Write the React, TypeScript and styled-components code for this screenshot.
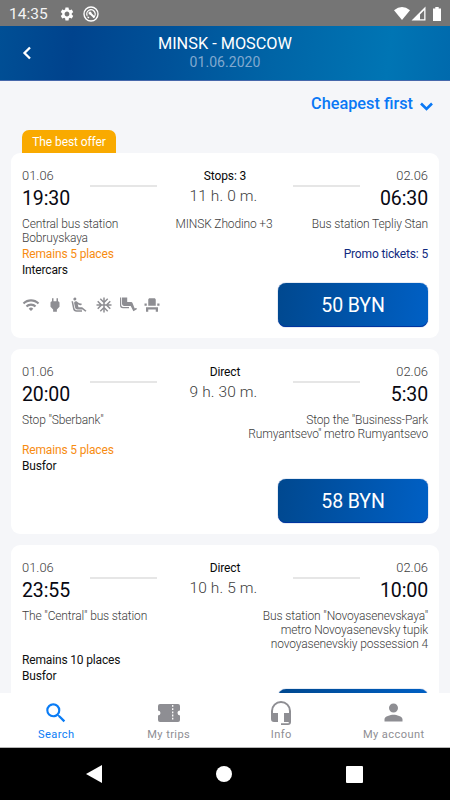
import React from "react";
import styled, { createGlobalStyle } from "styled-components";
import {
  MdWifi,
  MdPower,
  MdAirlineSeatReclineExtra,
  MdAcUnit,
  MdSearch,
  MdPerson,
  MdEventSeat,
  MdSettings,
} from "react-icons/md";

const GlobalStyle = createGlobalStyle`
  * { box-sizing: border-box; }
  body { margin: 0; background: #f5f6f9; font-family: Roboto, sans-serif; }
`;

const Screen = styled.div`
  width: 450px;
  height: 800px;
  display: flex;
  flex-direction: column;
  overflow: hidden;
  background: #f5f6f9;
`;

const StatusBar = styled.div`
  height: 26px;
  flex: none;
  display: flex;
  align-items: center;
  padding: 1px 8px 0 9px;
  background: #757575;
  color: #fff;
  svg { display: block; flex: none; }
`;

const Clock = styled.span`
  font-size: 15.5px;
  width: 50px;
  line-height: 24px;
  padding-top: 1px;
  color: #f4f4f4;
`;

const Spacer = styled.div`
  flex: 1;
`;

const StatusIcons = styled.div<{ $gap: number }>`
  display: flex;
  align-items: center;
  gap: ${(p) => p.$gap}px;
`;

const Header = styled.header`
  height: 55px;
  flex: none;
  display: grid;
  grid-template-columns: 54px 1fr 54px;
  align-items: center;
  background: linear-gradient(97deg, #004f95 0%, #00438d 16%, #005299 38%, #0064a6 60%, #0075b4 86%, #006aad 100%);
  border-bottom: 1px solid #4668ab;
  color: #fff;
`;

const BackButton = styled.button`
  border: 0;
  padding: 0 0 1px 22px;
  background: none;
  color: #fff;
  svg { display: block; }
`;

const Titles = styled.div`
  text-align: center;
  padding-bottom: 1px;
`;

const Route = styled.div`
  font-size: 16.3px;
  line-height: 19px;
`;

const RouteDate = styled.div`
  font-size: 14px;
  line-height: 19px;
  color: #80a9cf;
  letter-spacing: 0.05px;
`;

const SortRow = styled.button`
  height: 49px;
  flex: none;
  display: flex;
  align-items: center;
  justify-content: flex-end;
  gap: 7px;
  border: 0;
  background: none;
  padding: 0 17px 3px 0;
  color: #0a78f5;
  font: 500 16.3px/20px Roboto, sans-serif;
  svg { display: block; margin-top: 4px; }
`;

const List = styled.main`
  flex: 1;
  min-height: 0;
  overflow: hidden;
  padding: 0 11px;
`;

const Offer = styled.div`
  width: 94px;
  height: 23px;
  margin-left: 11px;
  border-radius: 7px 7px 0 0;
  background: #f9aa00;
  color: #fff;
  font-size: 12px;
  letter-spacing: -0.1px;
  line-height: 24px;
  text-align: center;
`;

const Card = styled.article`
  min-height: 185px;
  margin-bottom: 11px;
  padding: 14px 11px 11px;
  border-radius: 9px;
  background: #fff;
  color: #404040;
  display: flex;
  flex-direction: column;
`;

const Timeline = styled.div`
  height: 46px;
  display: grid;
  grid-template-columns: 68px 67px 1fr 67px 68px;
`;

const Moment = styled.div<{ $end?: boolean }>`
  text-align: ${(p) => (p.$end ? "right" : "left")};
`;

const Day = styled.div`
  font-size: 12.9px;
  font-weight: 300;
  line-height: 17px;
`;

const Time = styled.div`
  font-size: 19.5px;
  letter-spacing: -0.1px;
  line-height: 28px;
  padding-top: 1px;
  color: #080812;
`;

const Rule = styled.div`
  height: 2px;
  margin-top: 18px;
  background: #e6e6e6;
`;

const Trip = styled.div`
  display: flex;
  flex-direction: column;
  align-items: center;
  white-space: nowrap;
`;

const Stops = styled.div`
  font-size: 12px;
  letter-spacing: -0.1px;
  line-height: 17px;
  padding-top: 1px;
  color: #080808;
`;

const Duration = styled.div`
  margin-right: 3px;
  font-size: 15.5px;
  font-weight: 300;
  line-height: 20px;
  letter-spacing: 0.1px;
  padding-top: 1px;
`;

const Stations = styled.div<{ $via: boolean }>`
  min-height: 29px;
  margin-top: 4px;
  padding-bottom: 1px;
  display: grid;
  grid-template-columns: ${(p) => (p.$via ? "120px 164px 122px" : "200px 206px")};
  font-size: 12px;
  font-weight: 300;
  letter-spacing: -0.14px;
  line-height: 14px;
  white-space: pre;
`;

const Station = styled.div<{ $align?: string }>`
  text-align: ${(p) => p.$align || "left"};
`;

const InfoLine = styled.div<{ $tone?: string }>`
  display: flex;
  justify-content: space-between;
  font-size: 12px;
  letter-spacing: -0.16px;
  line-height: 16px;
  color: ${(p) => p.$tone || "#101010"};
`;

const Promo = styled.span`
  color: #102a80;
`;

const CardFoot = styled.div`
  display: flex;
  justify-content: space-between;
  align-items: center;
  margin-top: 5px;
`;

const Amenities = styled.div`
  display: flex;
  gap: 6.2px;
  color: #8e8e93;
  svg { width: 18px; height: 18px; display: block; }
`;

const Price = styled.button`
  width: 150px;
  height: 44px;
  border: 0;
  border-radius: 8px;
  padding: 2px 0 0;
  background: linear-gradient(97deg, #00488f, #0060c5);
  box-shadow: inset 0 -1px 0 #0034a0, 0 0 1px #003d9a;
  color: #fff;
  font: 400 19.5px/24px Roboto, sans-serif;
  letter-spacing: -0.1px;
`;

const Tabs = styled.nav`
  height: 55px;
  flex: none;
  display: grid;
  grid-template-columns: repeat(4, 1fr);
  background: #fff;
  border-bottom: 1px solid #b5b5b5;
`;

const Tab = styled.button<{ $active?: boolean }>`
  display: flex;
  flex-direction: column;
  align-items: center;
  border: 0;
  padding: 5px 0 0;
  background: none;
  color: ${(p) => (p.$active ? "#0a7cf5" : "#8e8e93")};
  font: 400 11.1px/15px Roboto, sans-serif;
  letter-spacing: 0.4px;
`;

const TabIcon = styled.span`
  height: 29px;
  display: flex;
  align-items: center;
  svg { display: block; }
`;

const SystemNav = styled.footer`
  height: 52px;
  flex: none;
  display: flex;
  background: #000;
  align-items: center;
  justify-content: space-between;
  padding: 0 87px 0 86px;
  svg { display: block; }
`;

interface TripData {
  stops: string;
  duration: string;
  depart: string;
  arrive: string;
  from: string;
  via?: string;
  to: string;
  remains: string;
  low: boolean;
  carrier: string;
  promo?: string;
  amenities?: boolean;
  price?: string;
}

const trips: TripData[] = [
  {
    stops: "Stops: 3", duration: "11 h. 0 m.", depart: "19:30", arrive: "06:30",
    from: "Central bus station\nBobruyskaya", via: "MINSK Zhodino +3", to: "Bus station Tepliy Stan",
    remains: "Remains 5 places", low: true, carrier: "Intercars",
    promo: "Promo tickets: 5", amenities: true, price: "50 BYN",
  },
  {
    stops: "Direct", duration: "9 h. 30 m.", depart: "20:00", arrive: "5:30",
    from: 'Stop "Sberbank"', to: 'Stop the "Business-Park\nRumyantsevo" metro Rumyantsevo',
    remains: "Remains 5 places", low: true, carrier: "Busfor", price: "58 BYN",
  },
  {
    stops: "Direct", duration: "10 h. 5 m.", depart: "23:55", arrive: "10:00",
    from: 'The "Central" bus station',
    to: 'Bus station "Novoyasenevskaya"\nmetro Novoyasenevsky tupik\nnovoyasenevskiy possession 4',
    remains: "Remains 10 places", low: false, carrier: "Busfor",
  },
];

const LegroomIcon = () => (
  <svg viewBox="0 0 18 18">
    <path
      fill="currentColor"
      d="M1 1.5h1.2v7.6c0 1.1.8 1.8 1.8 1.8h6v1.3H4a3 3 0 0 1-3-3ZM3 1.5h5.2V6h4c.6 0 1 .3 1.3.9l2.2 5.6 1.2-.4c.9-.2 1.3 1 .5 1.4l-3 1.7-2.7-5.3H5.2C4 9.9 3 9 3 7.8Z"
    />
  </svg>
);

const TripCard = ({ trip }: { trip: TripData }) => (
  <Card>
    <Timeline>
      <Moment><Day>01.06</Day><Time>{trip.depart}</Time></Moment>
      <Rule />
      <Trip><Stops>{trip.stops}</Stops><Duration>{trip.duration}</Duration></Trip>
      <Rule />
      <Moment $end><Day>02.06</Day><Time>{trip.arrive}</Time></Moment>
    </Timeline>
    <Stations $via={!!trip.via}>
      <Station>{trip.from}</Station>
      {trip.via && <Station $align="center">{trip.via}</Station>}
      <Station $align="right">{trip.to}</Station>
    </Stations>
    <InfoLine $tone={trip.low ? "#f78c12" : undefined}>
      <span>{trip.remains}</span>
      {trip.promo && <Promo>{trip.promo}</Promo>}
    </InfoLine>
    <InfoLine>{trip.carrier}</InfoLine>
    <CardFoot>
      <Amenities>
        {trip.amenities && (
          <>
            <MdWifi /><MdPower /><MdAirlineSeatReclineExtra />
            <MdAcUnit /><LegroomIcon /><MdEventSeat />
          </>
        )}
      </Amenities>
      <Price>{trip.price}</Price>
    </CardFoot>
  </Card>
);

export default function App() {
  return (
    <Screen>
      <GlobalStyle />
      <StatusBar>
        <Clock>14:35</Clock>
        <StatusIcons $gap={8}>
          <MdSettings size={16} />
          <svg width="16" height="16" viewBox="0 0 16 16" fill="none" stroke="#fff">
            <circle cx="8" cy="8" r="7" strokeWidth="1.4" />
            <path d="M4.2 9.8A4.2 4.2 0 1 1 10.2 11.5M4.5 10.8l1.5 1.2" strokeWidth="1.3" />
            <path d="M6.5 6.8l5 4.7" strokeWidth="2" />
            <circle cx="7" cy="7.1" r="1.5" fill="#fff" stroke="none" />
          </svg>
        </StatusIcons>
        <Spacer />
        <StatusIcons $gap={0}>
          <svg width="48" height="16" viewBox="0 0 48 16" fill="#fff">
            <path d="M0 4.2Q8-2.2 16 4.2L8 14Z" />
            <path fillRule="evenodd" d="M31.5 0.5v14H17.5ZM30.2 4.2l-4.2 4.2v4.8h4.2Z" />
            <path d="M41.3 1h3.4v1.5H47V15h-8V2.5h2.3Z" />
          </svg>
        </StatusIcons>
      </StatusBar>
      <Header>
        <BackButton aria-label="Back">
          <svg width="10" height="14" viewBox="0 0 10 14" fill="none" stroke="#fff" strokeWidth="2.3">
            <path d="M8 1.5 2.5 7 8 12.5" />
          </svg>
        </BackButton>
        <Titles>
          <Route>MINSK - MOSCOW</Route>
          <RouteDate>01.06.2020</RouteDate>
        </Titles>
      </Header>
      <SortRow>
        Cheapest first
        <svg width="13" height="9" viewBox="0 0 13 9" fill="none" stroke="currentColor" strokeWidth="2.6">
          <path d="M1 1.5 6.5 7 12 1.5" />
        </svg>
      </SortRow>
      <List>
        <Offer>The best offer</Offer>
        {trips.map((trip) => <TripCard key={trip.depart} trip={trip} />)}
      </List>
      <Tabs>
        <Tab $active><TabIcon><MdSearch size={26} /></TabIcon>Search</Tab>
        <Tab>
          <TabIcon>
            <svg width="22" height="18" viewBox="0 0 22 18">
              <path fill="#8e8e93" d="M2 0h18a2 2 0 0 1 2 2v4.5a2.5 2.5 0 0 0 0 5V16a2 2 0 0 1-2 2H2a2 2 0 0 1-2-2v-4.5a2.5 2.5 0 0 0 0-5V2a2 2 0 0 1 2-2Z" />
              <path stroke="#fff" strokeWidth="1.3" strokeDasharray="1.8 1.4" d="M14.7 1v16" />
            </svg>
          </TabIcon>
          My trips
        </Tab>
        <Tab>
          <TabIcon>
            <svg width="22" height="26" viewBox="0 0 22 26" fill="#8e8e93">
              <path d="M1 11a10 10 0 0 1 20 0v11a3 3 0 0 1-3 3h-7v-1.8h7.7V22H14v-9h5v-2a8 8 0 0 0-16 0v2h5v9H4a3 3 0 0 1-3-3Z" />
            </svg>
          </TabIcon>
          Info
        </Tab>
        <Tab><TabIcon><MdPerson size={27} /></TabIcon>My account</Tab>
      </Tabs>
      <SystemNav>
        <svg width="16" height="18" viewBox="0 0 16 18"><path fill="#fff" d="M16 0v18L0 9Z" /></svg>
        <svg width="16" height="16" viewBox="0 0 16 16"><circle cx="8" cy="8" r="8" fill="#fff" /></svg>
        <svg width="17" height="17" viewBox="0 0 17 17"><rect width="17" height="17" rx="1" fill="#fff" /></svg>
      </SystemNav>
    </Screen>
  );
}
